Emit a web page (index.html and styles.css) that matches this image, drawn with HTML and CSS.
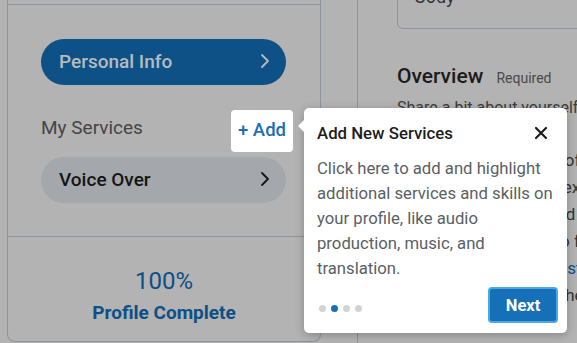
FILE: index.html
```html
<!DOCTYPE html>
<html>
    <head>
        <meta charset="utf-8">
        <link rel="stylesheet" href="styles.css">
        <title>Profile - Add New Services</title>
    </head>
    <body>
        <div class="page">

            <div class="side-card">
                <div class="side-top"></div>

                <div class="side-nav">
                    <a class="pill pill-active" href="#">
                        <span>Personal Info</span>
                        <svg class="chevron" viewBox="0 0 10 16" width="10" height="16"><path d="M2 2l6 6-6 6" fill="none" stroke="currentColor" stroke-width="1.8" stroke-linecap="round" stroke-linejoin="round"/></svg>
                    </a>

                    <div class="services-row">
                        <span class="services-label">My Services</span>
                        <button class="add-btn">+ Add</button>
                    </div>

                    <a class="pill pill-muted" href="#">
                        <span>Voice Over</span>
                        <svg class="chevron" viewBox="0 0 10 16" width="10" height="16"><path d="M2 2l6 6-6 6" fill="none" stroke="currentColor" stroke-width="1.8" stroke-linecap="round" stroke-linejoin="round"/></svg>
                    </a>
                </div>

                <div class="side-progress">
                    <div class="progress-value">100%</div>
                    <div class="progress-label">Profile Complete</div>
                </div>
            </div>

            <div class="main-card">
                <div class="name-input">Cody</div>

                <h2 class="overview-title">Overview <span class="required">Required</span></h2>
                <p class="overview-hint">Share a bit about yourself and the work you do so clients can get to know you.</p>

                <div class="overview-text">
                    <p>Hi there! I'm Cody, a professional voice over artist and producer</p>
                    <p>with over ten years of experience in commercial, narration and</p>
                    <p>character work. I record from a broadcast quality studio and</p>
                    <p>can deliver clean audio fast. Reach out anytime to discuss your</p>
                    <p class="link-line">project (or ask for a custom demo) and I'll get back to you.</p>
                    <p>I'm looking forward to hearing from you and working together.</p>
                </div>
            </div>

        </div>

        <div class="popover">
            <span class="popover-arrow"></span>
            <div class="popover-head">
                <h3>Add New Services</h3>
                <svg class="close" viewBox="0 0 14 14" width="14" height="14"><path d="M2 2l10 10M12 2L2 12" stroke="currentColor" stroke-width="2.2" stroke-linecap="round"/></svg>
            </div>
            <p class="popover-body">Click here to add and highlight additional services and skills on your profile, like audio production, music, and translation.</p>
            <div class="popover-foot">
                <div class="dots">
                    <span class="dot"></span>
                    <span class="dot dot-on"></span>
                    <span class="dot"></span>
                    <span class="dot"></span>
                </div>
                <button class="next-btn">Next</button>
            </div>
        </div>
    </body>
</html>
```

FILE: styles.css
```css
body {
    margin: 0;
    width: 577px;
    height: 343px;
    overflow: hidden;
    position: relative;
    background: #b3b3b3;
    font-family: Roboto, "Liberation Sans", Arial, sans-serif;
}

.page {
    display: flex;
    padding-left: 7px;
    height: 343px;
}

.side-card {
    width: 312px;
    flex-shrink: 0;
    border-left: 1px solid #8e949b;
    border-right: 1px solid #8e949b;
    border-bottom: 1px solid #8e949b;
    border-radius: 0 0 8px 8px;
    height: 341px;
    display: flex;
    flex-direction: column;
}

.side-top {
    height: 4px;
    border-bottom: 1px solid #8e949b;
}

.side-nav {
    padding: 34px 34px 0 33px;
    height: 197px;
    border-bottom: 1px solid #8e949b;
}

.pill {
    display: flex;
    align-items: center;
    justify-content: space-between;
    height: 44px;
    border-radius: 23px;
    padding: 0 16px 2px 18px;
    font-size: 19px;
    font-weight: 500;
    text-decoration: none;
}

.pill-active {
    background: #0d5186;
    color: #b6bbc0;
}

.pill-muted {
    background: #a4a8ac;
    color: #151515;
}

.services-row {
    display: flex;
    align-items: center;
    justify-content: space-between;
    margin: 23px -7px 7px 0;
    height: 42px;
}

.services-label {
    font-size: 19px;
    color: #454545;
    margin-top: -4px;
}

.add-btn {
    background: #ffffff;
    border: none;
    border-radius: 4px;
    height: 42px;
    width: 62px;
    padding: 0 0 2px 0;
    font-family: inherit;
    font-size: 18.5px;
    font-weight: 500;
    color: #1b6fb5;
    margin-top: 4px;
}

.side-progress {
    flex: 1;
    display: flex;
    flex-direction: column;
    align-items: center;
    padding-top: 30px;
    color: #0d4f86;
}

.progress-value {
    font-size: 24px;
    line-height: 28px;
}

.progress-label {
    margin-top: 6px;
    font-size: 19px;
    font-weight: 700;
    line-height: 24px;
}

.main-card {
    margin-left: 36px;
    border-left: 1px solid #8e949b;
    padding-left: 39px;
    flex: 1;
    min-width: 0;
    white-space: nowrap;
}

.name-input {
    width: 300px;
    height: 44px;
    margin-top: -21px;
    border: 1px solid #8e949b;
    border-radius: 6px;
    padding: 4px 0 0 16px;
    font-size: 18px;
    line-height: 26px;
    color: #333333;
}

.overview-title {
    margin: 34px 0 0 0;
    font-size: 21px;
    font-weight: 500;
    color: #1b1b1b;
    line-height: 26px;
}

.required {
    font-size: 14px;
    font-weight: 400;
    color: #4a4a4a;
    margin-left: 8px;
}

.overview-hint {
    margin: 7px 0 0 0;
    font-size: 16px;
    color: #3e3e3e;
}

.overview-text {
    margin-top: 30px;
    font-size: 17px;
    color: #333333;
}

.overview-text p {
    margin: 0;
    line-height: 27px;
}

.link-line {
    color: #0d4f86;
}

.popover {
    position: absolute;
    left: 304px;
    top: 108px;
    width: 263px;
    height: 225px;
    box-sizing: border-box;
    background: #ffffff;
    border-radius: 5px;
    box-shadow: 0 2px 10px rgba(0, 0, 0, 0.25);
    padding: 14px 9px 0 13px;
}

.popover-arrow {
    position: absolute;
    left: -6px;
    top: 12px;
    width: 0;
    height: 0;
    border-top: 6px solid transparent;
    border-bottom: 6px solid transparent;
    border-right: 6px solid #ffffff;
}

.popover-head {
    display: flex;
    align-items: center;
    justify-content: space-between;
    padding-right: 10px;
}

.popover-head h3 {
    margin: 0;
    font-size: 16.8px;
    font-weight: 500;
    color: #1c1c1c;
    line-height: 22px;
}

.close {
    color: #1c1c1c;
}

.popover-body {
    margin: 12px 0 0 0;
    font-size: 16.7px;
    line-height: 25px;
    color: #5a5f64;
}

.popover-foot {
    display: flex;
    align-items: center;
    justify-content: space-between;
    margin-top: 6px;
}

.dots {
    display: flex;
    gap: 5px;
    padding-left: 2px;
    margin-top: 6px;
}

.dot {
    width: 7px;
    height: 7px;
    border-radius: 50%;
    background: #d2d2d2;
}

.dot-on {
    background: #1b6fb5;
}

.next-btn {
    width: 70px;
    height: 36px;
    background: #1670b8;
    border: 2px solid #4aa8e6;
    border-radius: 4px;
    font-family: inherit;
    font-size: 16.5px;
    font-weight: 700;
    color: #ffffff;
}
```
